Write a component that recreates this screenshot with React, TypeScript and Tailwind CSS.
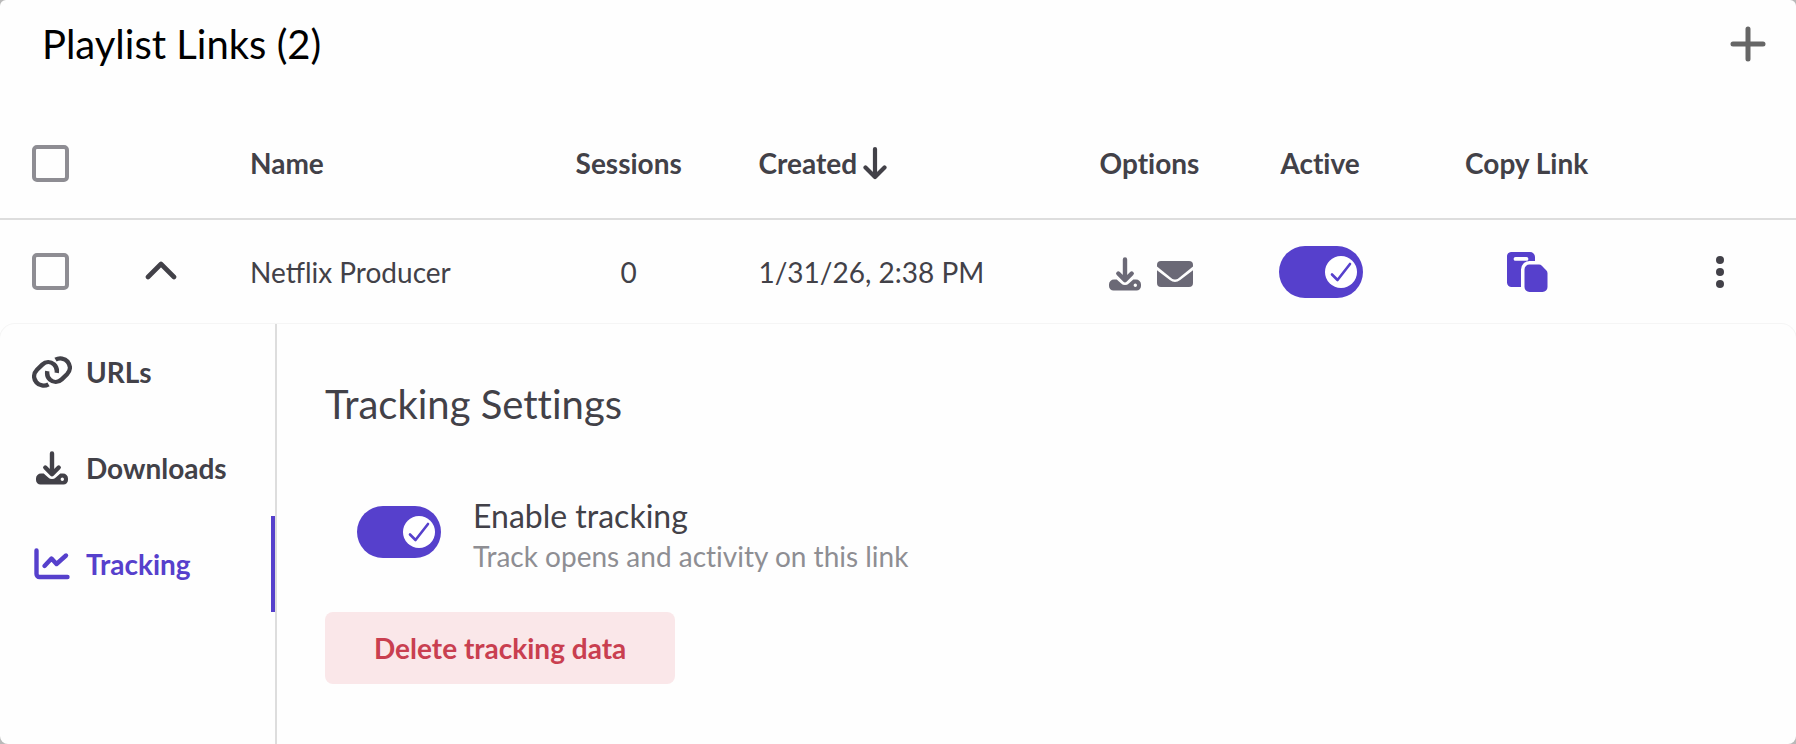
import React, { useState } from 'react';

type Tab = 'urls' | 'downloads' | 'tracking';

function PlusIcon() {
  return (
    <svg width="36" height="36" viewBox="0 0 36 36" fill="none" stroke="#666666" strokeWidth="5" strokeLinecap="round">
      <path d="M18 3v30M3 18h30" />
    </svg>
  );
}

function SortIcon() {
  return (
    <svg width="24" height="34" viewBox="0 0 24 34" fill="none" stroke="currentColor" strokeWidth="4.200" strokeLinecap="round" strokeLinejoin="round">
      <path d="M12 3v27M2.500 21.500L12 31l9.500-9.500" />
    </svg>
  );
}

function ChevronIcon() {
  return (
    <svg width="32" height="20" viewBox="0 0 32 20" fill="none" stroke="currentColor" strokeWidth="4.600" strokeLinecap="round" strokeLinejoin="round">
      <path d="M3 17L16 4l13 13" />
    </svg>
  );
}

function DownloadIcon() {
  return (
    <svg width="32" height="34" viewBox="0 0 32 34" fill="none">
      <path d="M16 2.500v19.500M9.300 16.500l6.700 6.700 6.700-6.700" stroke="currentColor" strokeWidth="4.400" strokeLinecap="round" strokeLinejoin="round" />
      <path
        fillRule="evenodd"
        clipRule="evenodd"
        d="M5 22.500h2.700l4.500 4a5.500 5.500 0 0 0 7.600 0l4.500-4H27a5 5 0 0 1 5 5V29a4.500 4.500 0 0 1-4.500 4.500h-23A4.500 4.500 0 0 1 0 29v-1.500a5 5 0 0 1 5-5ZM26.300 30a1.700 1.700 0 1 0 0-3.400 1.700 1.700 0 0 0 0 3.400Z"
        fill="currentColor"
      />
    </svg>
  );
}

function MailIcon() {
  return (
    <svg width="36" height="28" viewBox="0 0 36 28" fill="currentColor">
      <path d="M4 1h28a4 4 0 0 1 4 4v1.500L21.500 18.200a6 6 0 0 1-7 0L0 6.500V5a4 4 0 0 1 4-4Z" />
      <path d="M0 10.200l12.800 9.800a8.800 8.800 0 0 0 10.400 0L36 10.200V23a4 4 0 0 1-4 4H4a4 4 0 0 1-4-4V10.200Z" />
    </svg>
  );
}

function CopyIcon() {
  return (
    <svg width="42" height="42" viewBox="0 0 42 42" fill="currentColor">
      <path
        fillRule="evenodd"
        clipRule="evenodd"
        d="M5 1h19a5 5 0 0 1 5 5v4h-5.500A8.500 8.500 0 0 0 15 18.500V36H5.500A4.500 4.500 0 0 1 1 31.500V5.500A4.500 4.500 0 0 1 5 1ZM9.500 6a1.900 1.900 0 0 0 0 3.800h11a1.900 1.900 0 0 0 0-3.800h-11Z"
      />
      <path d="M23.500 13.500h9.500a4 4 0 0 1 2.800 1.200l4.400 4.600a4 4 0 0 1 1.300 2.900V36a5 5 0 0 1-5 5h-13a5 5 0 0 1-5-5V18.500a5 5 0 0 1 5-5Z" />
    </svg>
  );
}

function DotsIcon() {
  return (
    <svg width="8" height="34" viewBox="0 0 8 34" fill="currentColor">
      <circle cx="4" cy="5" r="4" />
      <circle cx="4" cy="17" r="4" />
      <circle cx="4" cy="29" r="4" />
    </svg>
  );
}

function LinkIcon() {
  return (
    <svg width="40" height="32" viewBox="0 0 40 32" fill="none" stroke="currentColor" strokeWidth="4.400">
      <path d="M16.500 28.300C12.500 30.600 7.300 29.700 4.300 26.200 1.200 22.400 1.500 17.400 5 13.800L10.300 8.600C13.700 5.300 18.600 5.300 22 8.300c2.400 2.300 3.300 5 2.700 8.500" />
      <path d="M23.500 3.700C27.500 1.400 32.700 2.300 35.700 5.800c3.100 3.800 2.800 8.800-.7 12.400l-5.300 5.200c-3.400 3.300-8.300 3.300-11.700.3-2.400-2.300-3.300-5-2.700-8.500" />
    </svg>
  );
}

function ChartIcon() {
  return (
    <svg width="36" height="32" viewBox="0 0 36 32" fill="none" stroke="currentColor" strokeWidth="4.400" strokeLinecap="round" strokeLinejoin="round">
      <path d="M2.500 2.500V26a3 3 0 0 0 3 3h28" />
      <path d="M10.500 18l7-7.500 5 5.500L32 7.500" />
    </svg>
  );
}

function Switch({ id, label, checked, onChange }: { id: string; label?: string; checked: boolean; onChange: (v: boolean) => void }) {
  return (
    <span className="relative inline-flex h-[52px] w-[84px] shrink-0">
      <input
        id={id}
        type="checkbox"
        role="switch"
        aria-label={label}
        checked={checked}
        onChange={e => onChange(e.target.checked)}
        className="h-full w-full cursor-pointer appearance-none rounded-full bg-gray-400 checked:bg-[#5640cc]"
      />
      <span
        className={`pointer-events-none absolute top-[10px] flex h-8 w-8 items-center justify-center rounded-full bg-white ${
          checked ? 'right-[6px]' : 'left-[6px]'
        }`}
      >
        {checked && (
          <svg width="22" height="20" viewBox="0 0 22 20" fill="none" stroke="#5640cc" strokeWidth="2.600" strokeLinecap="round" strokeLinejoin="round">
            <path d="M2 12.500l5.500 5.500L20 2" />
          </svg>
        )}
      </span>
    </span>
  );
}

function RowCheckbox({ label }: { label: string }) {
  return (
    <input
      type="checkbox"
      aria-label={label}
      className="block h-[37px] w-[37px] cursor-pointer appearance-none rounded-[5px] border-4 border-[#8e8d93] checked:border-[#5640cc] checked:bg-[#5640cc]"
    />
  );
}

const tabs: { value: Tab; label: string; icon: React.ComponentType }[] = [
  { value: 'urls', label: 'URLs', icon: LinkIcon },
  { value: 'downloads', label: 'Downloads', icon: DownloadIcon },
  { value: 'tracking', label: 'Tracking', icon: ChartIcon },
];

export default function App() {
  const [active, setActive] = useState(true);
  const [tracking, setTracking] = useState(true);
  const [tab, setTab] = useState<Tab>('tracking');

  return (
    <div className="min-h-screen bg-[#b9b9b9] font-['Lato',sans-serif] text-[28px] leading-9 text-[#424148] [font-variant-ligatures:none]">
      <main className="flex min-h-screen flex-col overflow-hidden rounded-t-md rounded-b-lg bg-[#fefefe]">
        {/* Header */}
        <header className="flex items-center justify-between pt-5 pr-[30px] pb-10 pl-[42px]">
          <h1 className="text-[40px] leading-[48px] text-black">Playlist Links (2)</h1>
          <button type="button" aria-label="Add link" className="cursor-pointer">
            <PlusIcon />
          </button>
        </header>

        {/* Links table */}
        <table className="w-full table-fixed border-collapse">
          <colgroup>
            <col className="w-[72px]" />
            <col className="w-[178px]" />
            <col />
            <col className="w-[10%]" />
            <col className="w-[20%]" />
            <col className="w-[8%]" />
            <col className="w-[11%]" />
            <col className="w-[12%]" />
            <col className="w-[9%]" />
          </colgroup>
          <thead>
            <tr className="h-[111px] border-b-2 border-[#dddddd]">
              <th className="pl-8">
                <RowCheckbox label="Select all links" />
              </th>
              <td />
              <th className="text-left font-bold">Name</th>
              <th className="font-bold">Sessions</th>
              <th className="pl-10 text-left font-bold">
                <button type="button" className="flex cursor-pointer items-center gap-[6px]">
                  Created
                  <SortIcon />
                </button>
              </th>
              <th className="font-bold">Options</th>
              <th className="font-bold">Active</th>
              <th className="font-bold">Copy Link</th>
              <td />
            </tr>
          </thead>
          <tbody>
            <tr className="h-[104px]">
              <td className="pl-8">
                <RowCheckbox label="Select Netflix Producer" />
              </td>
              <td>
                <button type="button" aria-label="Collapse row" className="mx-auto block cursor-pointer pb-1">
                  <ChevronIcon />
                </button>
              </td>
              <td className="whitespace-nowrap [font-variant-ligatures:normal]">Netflix Producer</td>
              <td className="text-center">0</td>
              <td className="pl-10 whitespace-nowrap">1/31/26, 2:38 PM</td>
              <td>
                <div className="flex items-center justify-center gap-4 pt-1 pl-1 text-[#6b6976]">
                  <DownloadIcon />
                  <MailIcon />
                </div>
              </td>
              <td>
                <div className="flex justify-center pl-[2px]">
                  <Switch id="link-active" label="Active" checked={active} onChange={setActive} />
                </div>
              </td>
              <td>
                <button type="button" aria-label="Copy link" className="mx-auto block cursor-pointer text-[#5640cc]">
                  <CopyIcon />
                </button>
              </td>
              <td className="pl-[10px]">
                <button type="button" aria-label="More actions" className="mx-auto block cursor-pointer">
                  <DotsIcon />
                </button>
              </td>
            </tr>
          </tbody>
        </table>

        {/* Expanded row */}
        <section className="-mx-px flex flex-1 rounded-t-2xl border border-b-0 border-[#f5f5f5]">
          <nav className="w-[277px] shrink-0 border-r-2 border-[#dddddd]">
            {tabs.map(({ value, label, icon: Icon }) => (
              <button
                key={value}
                type="button"
                onClick={() => setTab(value)}
                className={`flex h-24 w-full cursor-pointer items-center gap-[14px] border-r-4 pl-8 font-bold ${
                  tab === value ? 'border-[#5640cc] text-[#5640cc]' : 'border-transparent'
                }`}
              >
                <span className="flex w-10 justify-center">
                  <Icon />
                </span>
                {label}
              </button>
            ))}
          </nav>

          <div className="flex-1 pt-14 pl-12">
            <h2 className="text-[40px] leading-[48px]">Tracking Settings</h2>
            <div className="mt-[66px] flex items-start gap-8 pl-8">
              <span className="flex pt-3">
                <Switch id="enable-tracking" checked={tracking} onChange={setTracking} />
              </span>
              <label htmlFor="enable-tracking" className="cursor-pointer">
                <span className="block text-[32px] leading-[44px]">Enable tracking</span>
                <span className="block text-[#8e8e93]">Track opens and activity on this link</span>
              </label>
            </div>
            <button type="button" className="mt-[38px] h-[72px] cursor-pointer rounded-lg bg-[#fae7e9] px-[49px] font-bold text-[#c93f50]">
              Delete tracking data
            </button>
          </div>
        </section>
      </main>
    </div>
  );
}
